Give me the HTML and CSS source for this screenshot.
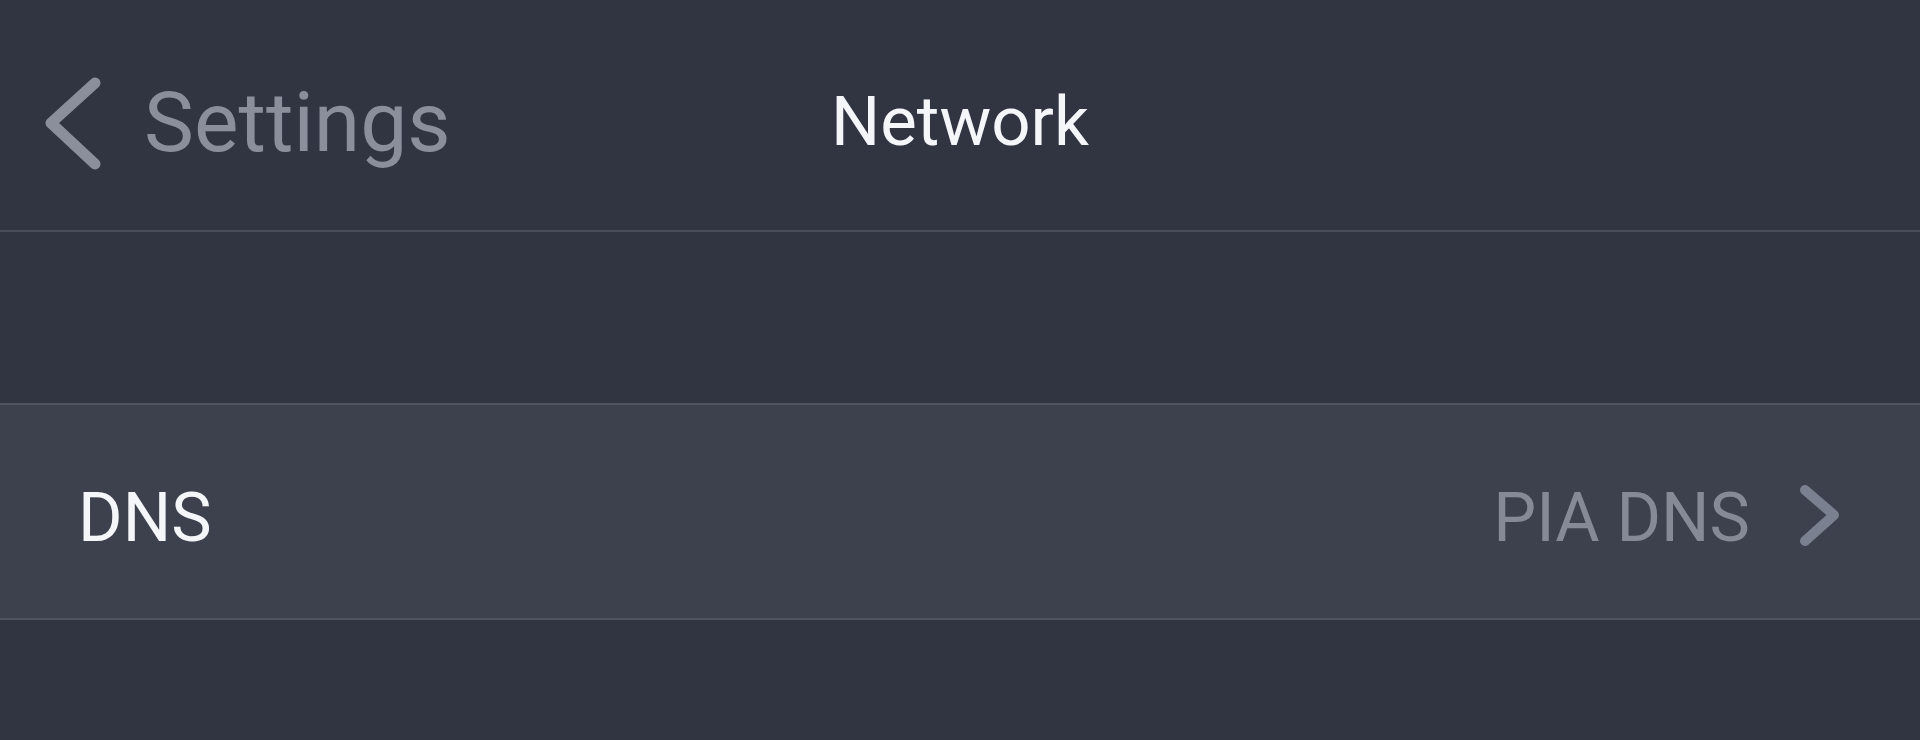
FILE: index.html
```html
<!DOCTYPE html>
<html lang="en">
  <head>
    <meta charset="UTF-8" />
    <meta name="viewport" content="width=device-width, initial-scale=1.0" />
    <title>Network</title>
    <link rel="stylesheet" href="styles.css">
  </head>
  <body>
    <header class="topbar">
      <a class="back" href="#">
        <svg class="back-icon" width="64" height="100" viewBox="0 0 64 100">
          <path d="M50 10 L6 50 L50 91" />
        </svg>
        <span class="back-label">Settings</span>
      </a>
      <h1 class="title">Network</h1>
      <div></div>
    </header>

    <div class="list">
      <a class="row" href="#">
        <span class="row-label">DNS</span>
        <span class="row-value">PIA DNS</span>
        <svg class="row-chevron" width="44" height="64" viewBox="0 0 44 64">
          <path d="M7 7 L36 32 L7 58" />
        </svg>
      </a>
    </div>
  </body>
</html>
```

FILE: styles.css
```css
body {
  margin: 0;
  background-color: #313542;
  font-family: Roboto, "Liberation Sans", sans-serif;
  height: 100vh;
  overflow: hidden;
}

a {
  text-decoration: none;
}

.topbar {
  display: grid;
  grid-template-columns: 1fr auto 1fr;
  align-items: start;
  height: 232px;
  padding: 84px 45px 0 45px;
  box-sizing: border-box;
  border-bottom: 2px solid #484c58;
}

.back {
  display: flex;
  align-items: center;
  gap: 35px;
  margin-top: -11px;
  color: #8b8f9c;
}

.back-icon path,
.row-chevron path {
  fill: none;
  stroke: #8b8f9c;
  stroke-width: 11;
  stroke-linecap: round;
  stroke-linejoin: round;
}

.back-label {
  font-size: 84px;
  line-height: 1;
}

.title {
  margin: 3px 0 0;
  font-size: 69px;
  font-weight: normal;
  line-height: 1;
  color: #f5f6fa;
}

.list {
  margin-top: 171px;
}

.row {
  display: flex;
  align-items: center;
  height: 201px;
  padding: 12px 78px 0 78px;
  background-color: #3d414e;
  border-top: 2px solid #4f535f;
  border-bottom: 2px solid #4f535f;
}

.row-label {
  flex: 1;
  font-size: 68px;
  line-height: 1;
  color: #f5f6fa;
}

.row-value {
  font-size: 68px;
  line-height: 1;
  color: #868a96;
}

.row-chevron {
  margin: 0 0 6px 48px;
}

.row-chevron path {
  stroke: #7b8090;
  stroke-width: 10;
}
```
